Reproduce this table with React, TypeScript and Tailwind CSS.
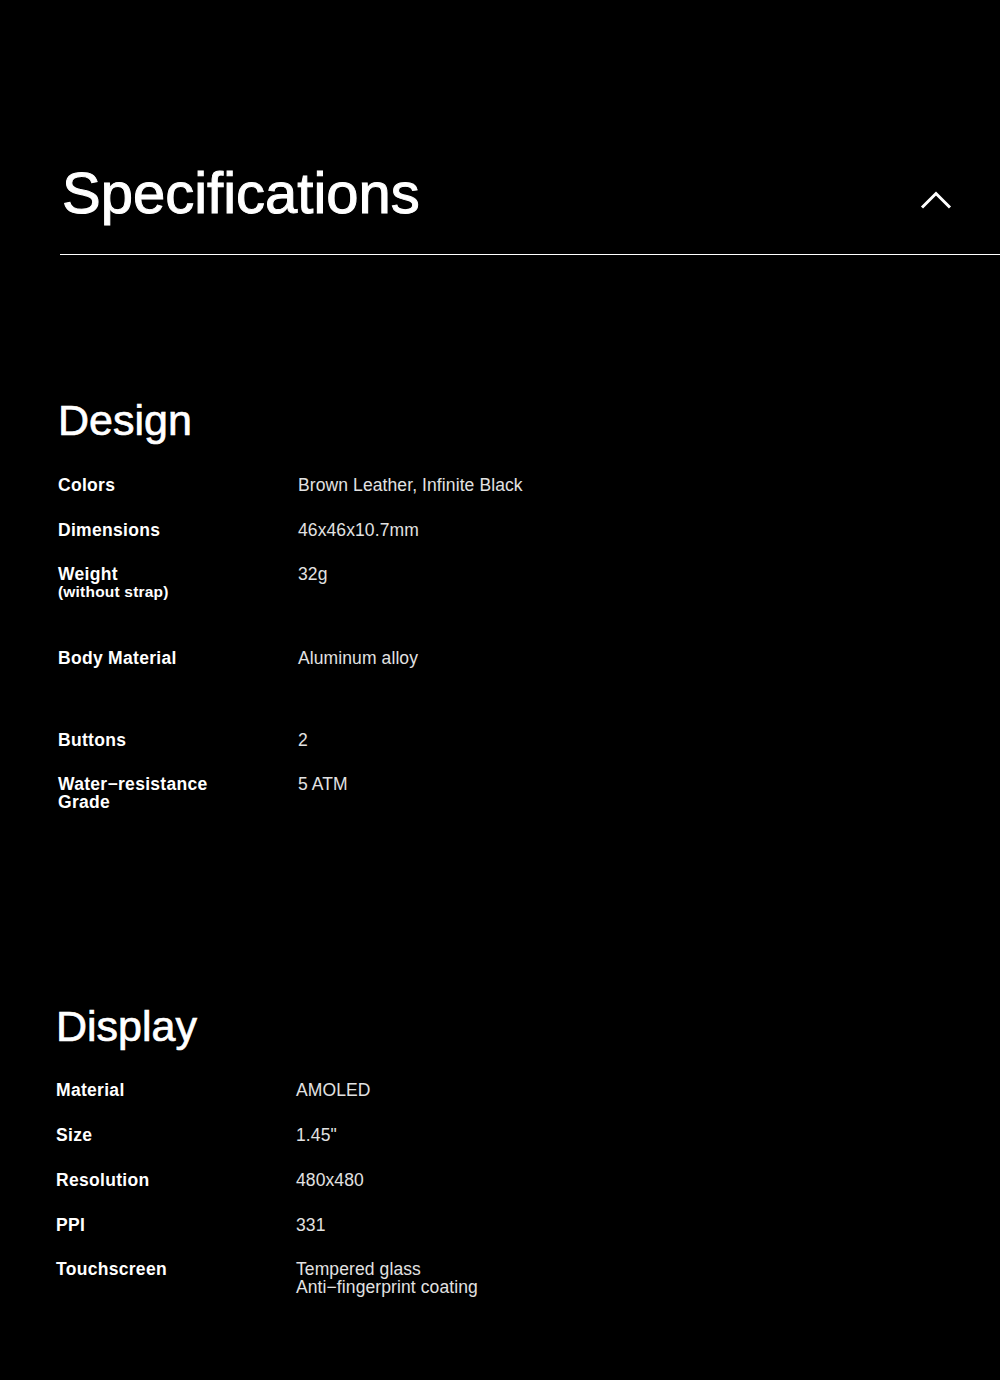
type Row = {
  label: string;
  sub?: string;
  value: string[];
  gap: string;
};

const design: Row[] = [
  { label: "Colors", value: ["Brown Leather, Infinite Black"], gap: "mt-[34px]" },
  { label: "Dimensions", value: ["46x46x10.7mm"], gap: "mt-[27px]" },
  { label: "Weight", sub: "(without strap)", value: ["32g"], gap: "mt-[26px]" },
  { label: "Body Material", value: ["Aluminum alloy"], gap: "mt-[48px]" },
  { label: "Buttons", value: ["2"], gap: "mt-[64px]" },
  { label: "Water−resistance Grade", value: ["5 ATM"], gap: "mt-[26px]" },
];

const display: Row[] = [
  { label: "Material", value: ["AMOLED"], gap: "mt-[33px]" },
  { label: "Size", value: ['1.45"'], gap: "mt-[27px]" },
  { label: "Resolution", value: ["480x480"], gap: "mt-[27px]" },
  { label: "PPI", value: ["331"], gap: "mt-[27px]" },
  { label: "Touchscreen", value: ["Tempered glass", "Anti−fingerprint coating"], gap: "mt-[26px]" },
];

function SpecRow({ row }: { row: Row }) {
  return (
    <div className={`flex ${row.gap}`}>
      <div className="w-[240px] shrink-0 pr-4">
        <div className="text-[17.5px] leading-[18px] font-bold tracking-[0.3px] text-white">
          {row.label === "Water−resistance Grade" ? (
            <>
              Water−resistance
              <br />
              Grade
            </>
          ) : (
            row.label
          )}
        </div>
        {row.sub && (
          <div className="text-[15.5px] leading-[18px] font-bold tracking-[0.2px] text-white">{row.sub}</div>
        )}
      </div>
      <div className="text-[17.5px] leading-[18px] tracking-[0.1px] text-[#e2e2e2]">
        {row.value.map((v) => (
          <div key={v}>{v}</div>
        ))}
      </div>
    </div>
  );
}

function Section({ title, rows, className }: { title: string; rows: Row[]; className: string }) {
  return (
    <section className={className}>
      <h2 className="text-[43px] leading-none text-white [-webkit-text-stroke:0.7px_white]">{title}</h2>
      {rows.map((r) => (
        <SpecRow key={r.label} row={r} />
      ))}
    </section>
  );
}

export default function App() {
  return (
    <div className="min-h-[1380px] w-full bg-black font-['Liberation_Sans',Arial,sans-serif] text-white">
      <header className="pt-[164px]">
        <div className="flex items-start justify-between pl-[62px] pr-[48px]">
          <h1 className="text-[58px] leading-none text-white [-webkit-text-stroke:1px_white]">
            Specifications
          </h1>
          <button className="mt-[27px]" aria-label="Collapse">
            <svg width="32" height="18" viewBox="0 0 32 18" fill="none">
              <polyline points="2,16.5 16,2.5 30,16.5" stroke="white" strokeWidth="3" />
            </svg>
          </button>
        </div>
        <div className="ml-[60px] mt-[32px] h-px bg-white" />
      </header>

      <Section title="Design" rows={design} className="mt-[144px] pl-[58px]" />
      <Section title="Display" rows={display} className="mt-[194px] pl-[56px]" />
    </div>
  );
}
